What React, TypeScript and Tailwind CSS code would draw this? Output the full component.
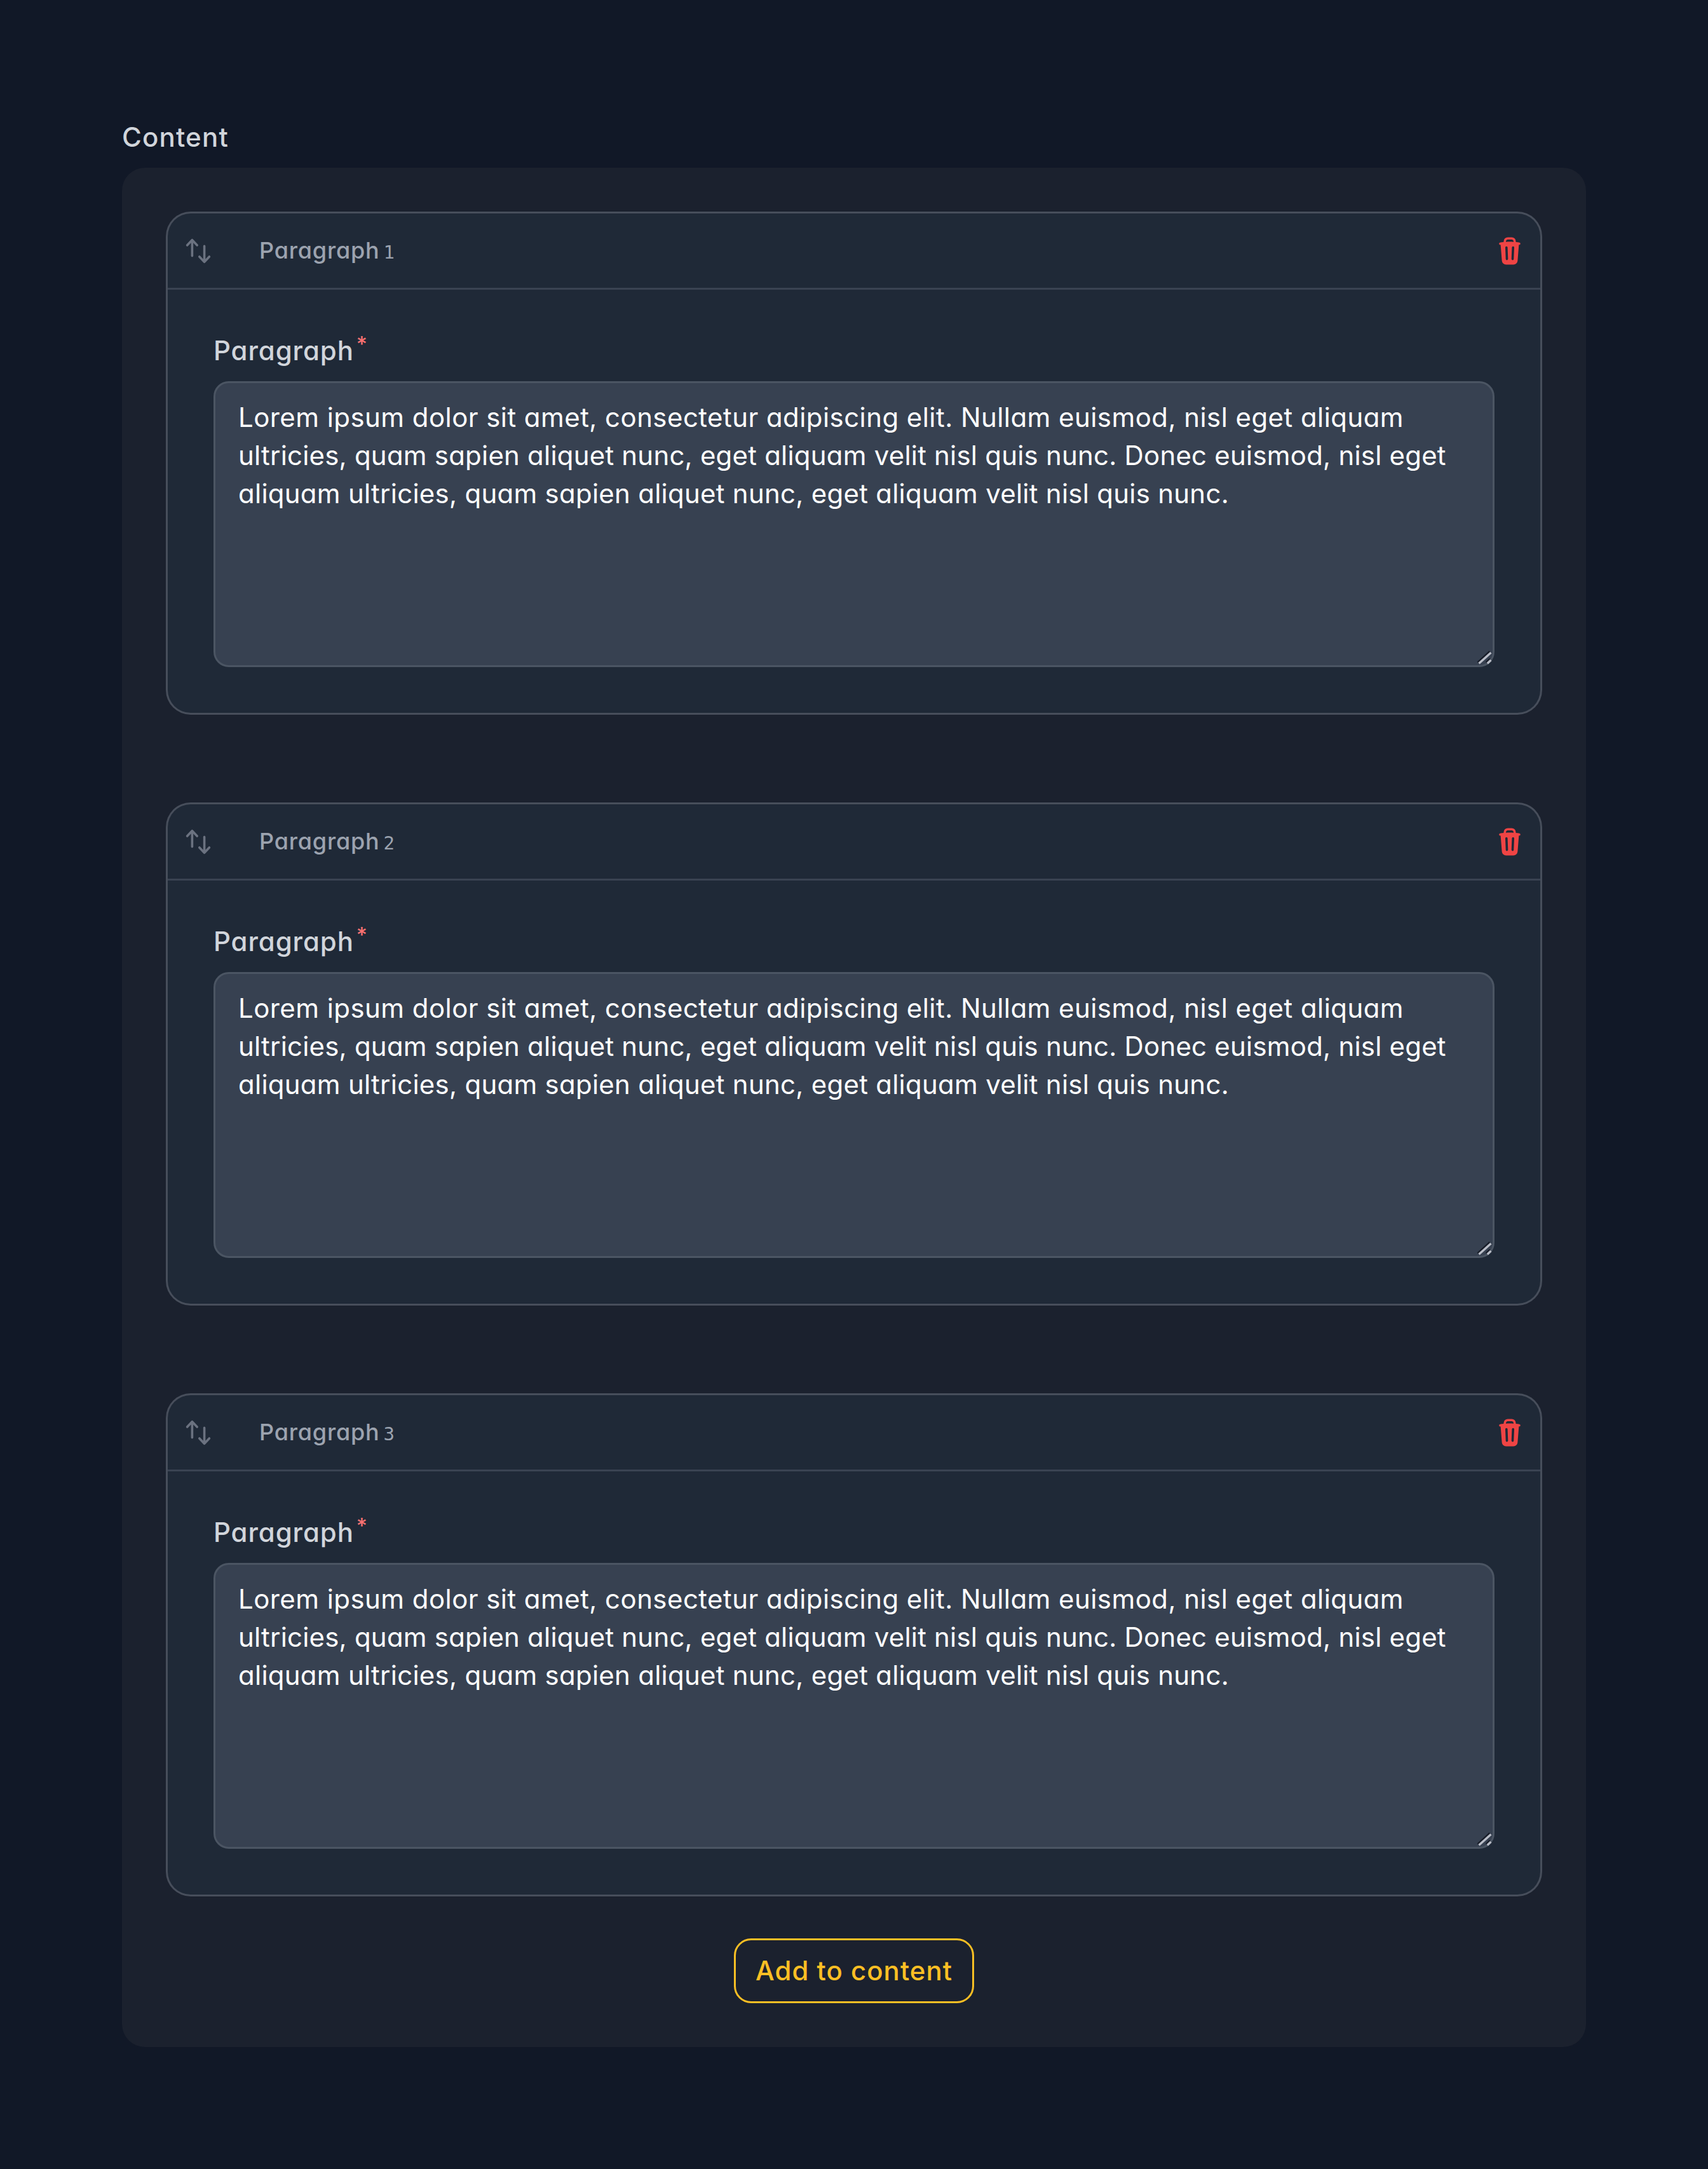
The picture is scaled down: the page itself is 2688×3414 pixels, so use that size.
import { HiMiniArrowsUpDown, HiMiniTrash } from "react-icons/hi2";

const items = [1, 2, 3];

function ResizeHandle() {
  return (
    <svg className="absolute -right-[3px] -bottom-[3px] h-[30px] w-[30px]" viewBox="0 0 30 30" fill="none">
      <path d="M3.5 22.5 22.5 5.2M16.8 22.5 22.8 17" stroke="#171c28" strokeWidth="2.6" />
      <path d="M5.5 24.2 24.4 7.2M18.8 24.2 24.4 19" stroke="#b9bdc7" strokeWidth="3.4" />
    </svg>
  );
}

function ParagraphText() {
  return (
    <div className="relative h-[450px] rounded-[24px] border-[3px] border-[#4b5563] bg-[#374151] py-6 pr-9 pl-9 text-[42px] leading-[60px] whitespace-nowrap text-white">
      <div className="tracking-[0.43px]">
        Lorem ipsum dolor sit amet, consectetur adipiscing elit. Nullam euismod, nisl eget aliquam
      </div>
      <div className="tracking-[0.2px]">
        ultricies, quam sapien aliquet nunc, eget aliquam velit nisl quis nunc. Donec euismod, nisl eget
      </div>
      <div className="tracking-[0.25px]">
        aliquam ultricies, quam sapien aliquet nunc, eget aliquam velit nisl quis nunc.
      </div>
      <ResizeHandle />
    </div>
  );
}

function BlockCard({ index }: { index: number }) {
  return (
    <section className="rounded-[36px] bg-[#1f2937] ring-[3px] ring-[#474e5b]">
      <header className="flex h-[120px] items-center border-b-[3px] border-[#3a4352] px-6">
        <HiMiniArrowsUpDown className="size-12 text-[#6b7280]" />
        <div className="mt-0.5 ml-[72px] flex items-baseline text-[#9ca3af]">
          <span className="text-[36px] leading-[48px] font-medium tracking-[0.8px]">Paragraph</span>
          <span className="ml-[6px] font-['DejaVu_Sans_Mono',monospace] text-[29px] leading-[48px]">{index}</span>
        </div>
        <HiMiniTrash className="ml-auto size-12 text-[#ef4444]" />
      </header>
      <div className="px-[72px] pt-[72px] pb-[72px]">
        <div className="mb-6 flex h-12 items-start text-[42px] leading-[48px] font-medium tracking-[0.9px] text-[#d1d5db]">
          <span>Paragraph</span>
          <span className="ml-[4px] text-[33px] leading-[26px] text-[#f87171]">*</span>
        </div>
        <ParagraphText />
      </div>
    </section>
  );
}

export default function App() {
  return (
    <main className="min-h-[3414px] bg-[#111827] p-48 font-['Inter',sans-serif] [font-feature-settings:'cv11']">
      <div className="mb-6 h-12 text-[42px] leading-[48px] font-medium tracking-[1.2px] text-[#d1d5db]">
        Content
      </div>
      <div className="flex h-[2958px] flex-col items-center rounded-[36px] bg-[#1b212e] p-[72px]">
        <div className="flex w-full flex-col gap-36">
          {items.map((n) => (
            <BlockCard key={n} index={n} />
          ))}
        </div>
        <button className="mt-[69px] flex h-[102px] w-[378px] shrink-0 items-center justify-center rounded-[27px] border-[3px] border-[#fbbf24] text-[42px] leading-[60px] font-medium tracking-[1px] whitespace-nowrap text-[#fbbf24]">
          Add to content
        </button>
      </div>
    </main>
  );
}
